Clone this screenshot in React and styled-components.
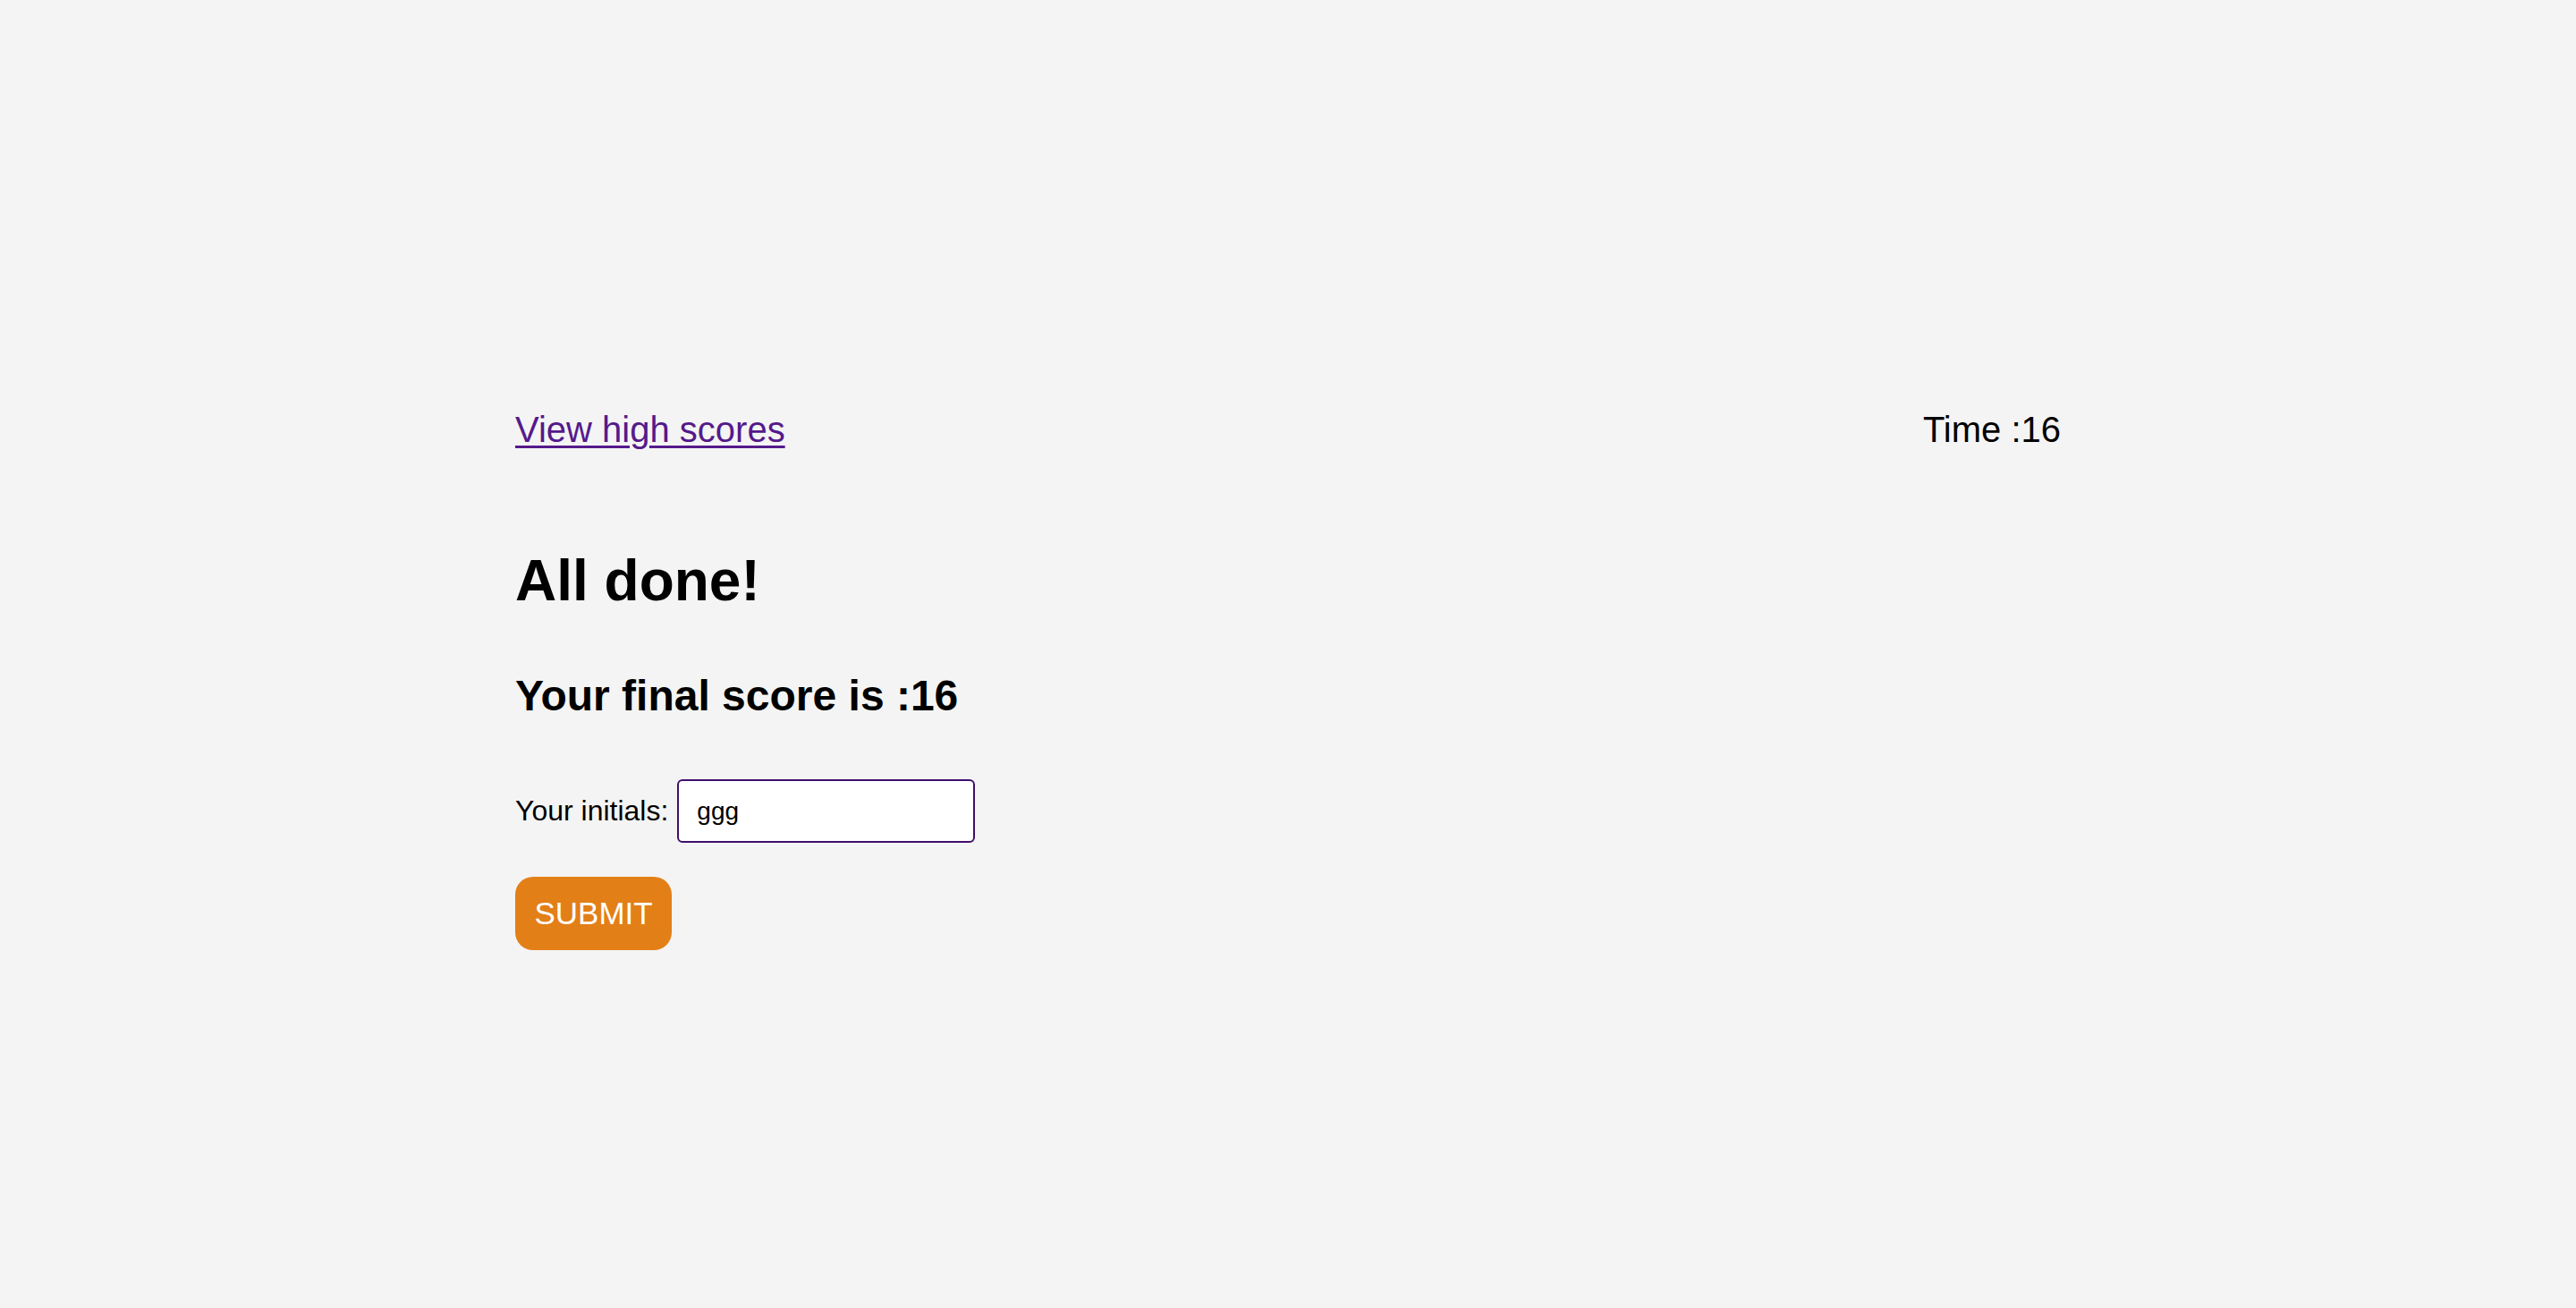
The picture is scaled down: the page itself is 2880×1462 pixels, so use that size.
import React, { useState } from "react";
import styled, { createGlobalStyle } from "styled-components";

const GlobalStyle = createGlobalStyle`
  html, body {
    margin: 0;
    padding: 0;
    background: #f4f4f4;
  }
  body {
    font-family: "Liberation Sans", Arial, Helvetica, sans-serif;
    color: #000;
  }
  * { box-sizing: border-box; }
`;

const Page = styled.main`
  min-height: 1462px;
  padding-top: 457px;
`;

const Container = styled.div`
  width: 60%;
  margin: 0 auto;
`;

const Header = styled.header`
  display: flex;
  justify-content: space-between;
  align-items: baseline;
  font-size: 40px;
  line-height: 46px;
`;

const ScoresLink = styled.a`
  color: #551a8b;
  text-decoration: underline;
  text-decoration-thickness: 3px;
  text-underline-offset: 4px;
`;

const Timer = styled.span`
  color: #000;
`;

const Title = styled.h1`
  margin: 109px 0 0;
  font-size: 64px;
  line-height: 75px;
  font-weight: 700;
`;

const Score = styled.h2`
  margin: 63px 0 0;
  font-size: 48px;
  line-height: 55px;
  font-weight: 700;
`;

const Form = styled.form`
  margin: 0;
`;

const FieldRow = styled.div`
  margin-top: 66px;
  display: flex;
  align-items: center;
  gap: 10px;
`;

const Label = styled.label`
  font-size: 32px;
  line-height: 37px;
`;

const Input = styled.input`
  width: 333px;
  height: 71px;
  padding: 0 20px;
  border: 2px solid #3f0f6b;
  border-radius: 6px;
  background: #fff;
  font-family: "Liberation Sans", Arial, sans-serif;
  font-size: 28px;
  color: #000;
  outline: none;
`;

const SubmitButton = styled.button`
  margin-top: 38px;
  display: block;
  height: 82px;
  padding: 0 21.5px;
  border: none;
  border-radius: 20px;
  background: #e37f17;
  color: #fff;
  font-family: "Liberation Sans", Arial, sans-serif;
  font-size: 35px;
  line-height: 40px;
  cursor: pointer;
`;

export default function App() {
  const [initials, setInitials] = useState("ggg");
  return (
    <>
      <GlobalStyle />
      <Page>
        <Container>
          <Header>
            <ScoresLink href="#">View high scores</ScoresLink>
            <Timer>Time :16</Timer>
          </Header>
          <Title>All done!</Title>
          <Score>Your final score is :16</Score>
          <Form onSubmit={(e) => e.preventDefault()}>
            <FieldRow>
              <Label htmlFor="initials">Your initials:</Label>
              <Input
                id="initials"
                value={initials}
                onChange={(e) => setInitials(e.target.value)}
              />
            </FieldRow>
            <SubmitButton type="submit">SUBMIT</SubmitButton>
          </Form>
        </Container>
      </Page>
    </>
  );
}
